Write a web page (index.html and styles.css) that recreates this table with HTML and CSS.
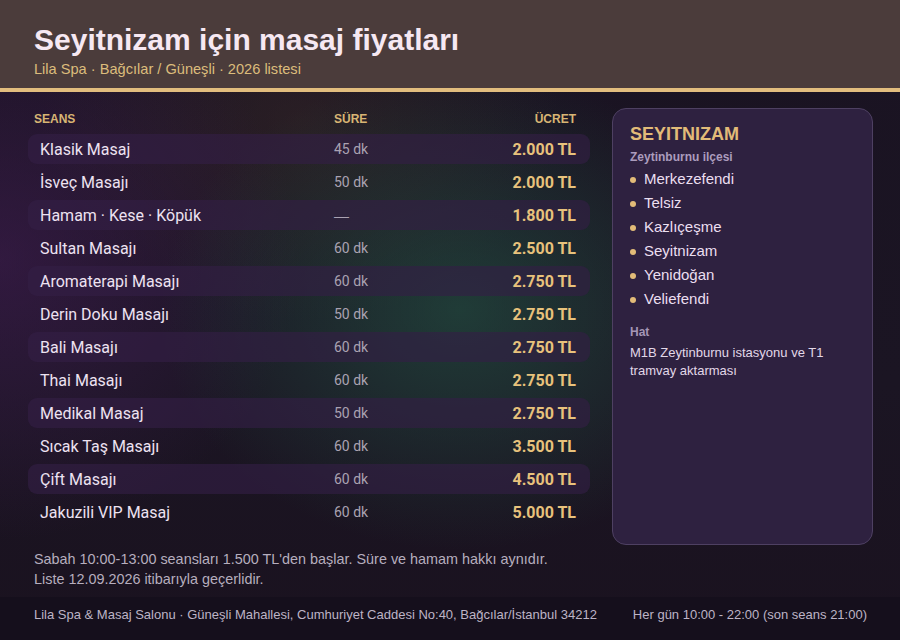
FILE: index.html
```html
<!DOCTYPE html>
<html lang="tr">
<head>
<meta charset="utf-8">
<title>Seyitnizam için masaj fiyatları</title>
<link rel="stylesheet" href="styles.css">
</head>
<body>
<div class="page">
  <header class="top">
    <h1 class="title">Seyitnizam için masaj fiyatları</h1>
    <p class="subtitle">Lila Spa · Bağcılar / Güneşli · 2026 listesi</p>
  </header>
  <main class="main">
    <section class="prices">
      <div class="thead">
        <span>SEANS</span><span>SÜRE</span><span class="r">ÜCRET</span>
      </div>
      <div class="rows">
        <div class="row alt"><span class="name">Klasik Masaj</span><span class="dur">45 dk</span><span class="price">2.000 TL</span></div>
        <div class="row"><span class="name">İsveç Masajı</span><span class="dur">50 dk</span><span class="price">2.000 TL</span></div>
        <div class="row alt"><span class="name">Hamam · Kese · Köpük</span><span class="dur dash">—</span><span class="price">1.800 TL</span></div>
        <div class="row"><span class="name">Sultan Masajı</span><span class="dur">60 dk</span><span class="price">2.500 TL</span></div>
        <div class="row alt"><span class="name">Aromaterapi Masajı</span><span class="dur">60 dk</span><span class="price">2.750 TL</span></div>
        <div class="row"><span class="name">Derin Doku Masajı</span><span class="dur">50 dk</span><span class="price">2.750 TL</span></div>
        <div class="row alt"><span class="name">Bali Masajı</span><span class="dur">60 dk</span><span class="price">2.750 TL</span></div>
        <div class="row"><span class="name">Thai Masajı</span><span class="dur">60 dk</span><span class="price">2.750 TL</span></div>
        <div class="row alt"><span class="name">Medikal Masaj</span><span class="dur">50 dk</span><span class="price">2.750 TL</span></div>
        <div class="row"><span class="name">Sıcak Taş Masajı</span><span class="dur">60 dk</span><span class="price">3.500 TL</span></div>
        <div class="row alt"><span class="name">Çift Masajı</span><span class="dur">60 dk</span><span class="price">4.500 TL</span></div>
        <div class="row"><span class="name">Jakuzili VIP Masaj</span><span class="dur">60 dk</span><span class="price">5.000 TL</span></div>
      </div>
      <p class="notes">Sabah 10:00-13:00 seansları 1.500 TL'den başlar. Süre ve hamam hakkı aynıdır.<br>Liste 12.09.2026 itibarıyla geçerlidir.</p>
    </section>
    <aside class="card">
      <h2 class="card-title">SEYITNIZAM</h2>
      <p class="card-sub">Zeytinburnu ilçesi</p>
      <ul class="hoods">
        <li>Merkezefendi</li>
        <li>Telsiz</li>
        <li>Kazlıçeşme</li>
        <li>Seyitnizam</li>
        <li>Yenidoğan</li>
        <li>Veliefendi</li>
      </ul>
      <p class="card-label">Hat</p>
      <p class="card-text">M1B Zeytinburnu istasyonu ve T1 tramvay aktarması</p>
    </aside>
  </main>
  <footer class="foot">
    <span>Lila Spa &amp; Masaj Salonu · Güneşli Mahallesi, Cumhuriyet Caddesi No:40, Bağcılar/İstanbul 34212</span>
    <span>Her gün 10:00 - 22:00 (son seans 21:00)</span>
  </footer>
</div>
</body>
</html>
```

FILE: styles.css
```css
* { box-sizing: border-box; }
html, body { margin: 0; padding: 0; }
body {
  width: 900px;
  height: 640px;
  overflow: hidden;
  background: #19121f;
  font-family: "Liberation Sans", Arial, sans-serif;
}
.page {
  width: 900px;
  height: 640px;
  display: flex;
  flex-direction: column;
  background:
    radial-gradient(ellipse 300px 240px at 460px 310px, rgba(36, 92, 72, 0.55), rgba(36, 92, 72, 0) 100%),
    radial-gradient(ellipse 300px 280px at 0px 260px, rgba(72, 30, 92, 0.5), rgba(72, 30, 92, 0) 100%),
    radial-gradient(ellipse 260px 200px at 300px 120px, rgba(70, 50, 40, 0.35), rgba(70, 50, 40, 0) 100%),
    linear-gradient(180deg, #1a1322 0%, #1b1523 60%, #1a121f 100%);
}
.top {
  height: 92px;
  flex: none;
  background: #4b3c3b;
  border-bottom: 4px solid #e2bd7e;
  padding: 22px 34px 0;
}
.title {
  margin: 0;
  font-size: 30px;
  line-height: 35px;
  font-weight: 700;
  color: #f6e8f2;
}
.subtitle {
  margin: 3px 0 0;
  font-size: 14.6px;
  line-height: 18px;
  color: #dcbc7c;
}
.main {
  flex: 1;
  display: flex;
  gap: 22px;
  padding: 17px 27px 0 28px;
}
.prices {
  width: 562px;
  flex: none;
  font-family: Roboto, "Liberation Sans", sans-serif;
}
.thead {
  display: grid;
  grid-template-columns: 300px 1fr auto;
  padding: 0 14px 0 6px;
  height: 20px;
  line-height: 20px;
  font-family: "Liberation Sans", Arial, sans-serif;
  font-size: 12px;
  font-weight: 700;
  color: #d8b574;
}
.r { text-align: right; }
.rows {
  margin-top: 5px;
  display: flex;
  flex-direction: column;
  gap: 3px;
}
.row {
  display: grid;
  grid-template-columns: 294px 1fr auto;
  align-items: center;
  height: 30px;
  padding: 0 14px 0 12px;
  border-radius: 9px;
}
.row.alt { background: rgba(52, 30, 70, 0.62); }
.name {
  font-size: 16px;
  color: #ede2f1;
}
.dur {
  font-size: 14px;
  color: #aaa2b2;
}
.dash {
  font-family: "Liberation Sans", Arial, sans-serif;
  font-size: 15px;
}
.price {
  font-size: 16px;
  font-weight: 700;
  color: #e8c27c;
  text-align: right;
}
.notes {
  margin: 22px 0 0 6px;
  font-family: "Liberation Sans", Arial, sans-serif;
  font-size: 14.4px;
  line-height: 20px;
  color: #b6aebe;
}
.card {
  width: 261px;
  height: 437px;
  flex: none;
  margin-top: -1px;
  background: #2e2140;
  border: 1px solid #4e4062;
  border-radius: 14px;
  padding: 14px 17px;
}
.card-title {
  margin: 0;
  font-size: 18px;
  line-height: 22px;
  font-weight: 700;
  color: #e2bb78;
}
.card-sub {
  margin: 4px 0 0;
  font-size: 12px;
  line-height: 16px;
  font-weight: 700;
  color: #ab9cbd;
}
.hoods {
  list-style: none;
  margin: 2px 0 0;
  padding: 0;
}
.hoods li {
  display: flex;
  align-items: center;
  gap: 8px;
  font-size: 15px;
  line-height: 24px;
  color: #ebdff0;
}
.hoods li::before {
  content: "";
  width: 6px;
  height: 6px;
  border-radius: 50%;
  background: #e2bb78;
  margin-top: 2px;
}
.card-label {
  margin: 13px 0 0;
  font-size: 12px;
  line-height: 16px;
  font-weight: 700;
  color: #a596b6;
}
.card-text {
  margin: 4px 0 0;
  font-size: 13px;
  line-height: 18px;
  color: #e2d8e8;
}
.foot {
  height: 43px;
  flex: none;
  background: #150f1c;
  display: flex;
  justify-content: space-between;
  align-items: flex-start;
  padding: 10px 33px 0 34px;
  font-size: 13px;
  line-height: 15px;
  color: #bdb4c6;
}
```
